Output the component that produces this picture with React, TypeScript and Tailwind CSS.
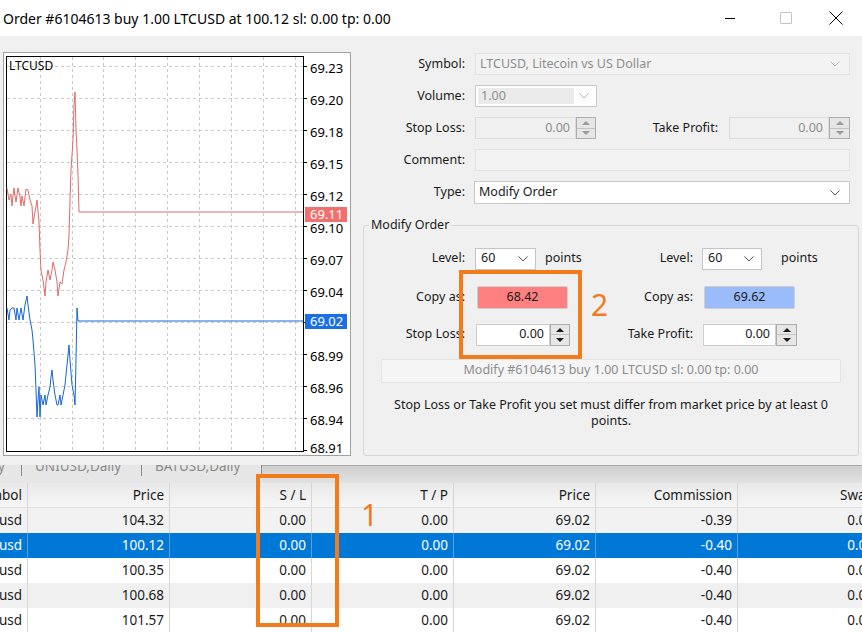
import React from 'react'

const redLine = [
  [7, 188], [9, 200], [11, 194], [12, 206], [13, 196], [14, 188], [15, 196], [16, 202], [18, 188],
  [20, 197], [21, 206], [22, 196], [24, 206], [26, 189], [28, 190], [30, 200], [32, 206], [33, 224],
  [35, 212], [37, 200], [39, 222], [40, 250], [41, 270], [43, 280], [45, 296], [46, 282], [48, 270],
  [50, 280], [52, 270], [53, 262], [55, 270], [57, 282], [58, 296], [60, 282], [62, 284], [64, 270],
  [66, 262], [68, 250], [69, 235], [70, 200], [71, 170], [73, 140], [74, 105], [75, 92], [76, 130],
  [77, 150], [78, 175], [79, 212], [303, 212],
]

const blueLine = [
  [7, 308], [9, 320], [10, 310], [12, 308], [14, 308], [16, 320], [17, 308], [19, 320], [21, 308],
  [23, 320], [25, 305], [27, 296], [28, 305], [30, 320], [32, 330], [33, 340], [35, 365], [36, 390],
  [37, 417], [38, 400], [39, 387], [40, 417], [41, 395], [43, 405], [45, 395], [46, 405], [48, 395],
  [50, 387], [51, 377], [52, 370], [53, 380], [55, 395], [57, 405], [58, 405], [60, 395], [61, 405],
  [63, 395], [65, 385], [67, 365], [69, 345], [70, 360], [72, 385], [74, 395], [75, 405], [76, 360],
  [77, 308], [78, 321], [303, 321],
]

const gridX = [40, 72, 103, 135, 167, 199, 231, 263, 295]
const priceLevels: [number, string | null][] = [
  [66, '69.23'], [98, '69.20'], [130, '69.18'], [162, '69.15'], [194, '69.12'], [226, '69.10'],
  [258, '69.07'], [290, '69.04'], [322, null], [354, '68.99'], [386, '68.96'], [418, '68.94'],
  [446, '68.91'],
]

function Chart() {
  return (
    <div className="h-[404px] w-[348px] overflow-hidden border border-[#a0a0a0] bg-white">
      <svg width="346" height="402" viewBox="0 0 346 402" className="block">
        <g transform="translate(-4 -53)" fontFamily="'Noto Sans', sans-serif">
          {gridX.map((x) => (
            <line key={x} x1={x + 0.5} y1={57} x2={x + 0.5} y2={451} stroke="#c9c9c9" strokeDasharray="3 3" />
          ))}
          {priceLevels.map(([y]) =>
            y < 440 ? (
              <line key={y} x1={7} y1={y + 0.5} x2={303} y2={y + 0.5} stroke="#c9c9c9" strokeDasharray="3 3" />
            ) : null
          )}
          {priceLevels.map(([y]) =>
            y < 440 ? <line key={'t' + y} x1={303} y1={y + 0.5} x2={307} y2={y + 0.5} stroke="#000" /> : null
          )}
          <line x1={303} y1={450.5} x2={307} y2={450.5} stroke="#000" />
          <rect x={6.5} y={56.5} width={297} height={395} fill="none" stroke="#000" />
          <text x={9} y={70} fontSize="12" fill="#000">LTCUSD</text>
          <polyline points={redLine.map((p) => p.join(',')).join(' ')} fill="none" stroke="#e26a6a" strokeWidth="1" />
          <polyline points={blueLine.map((p) => p.join(',')).join(' ')} fill="none" stroke="#1565d8" strokeWidth="1" />
          {priceLevels.map(([y, t]) =>
            t ? (
              <text key={'l' + y} x={310} y={y + 7} fontSize="13" fill="#000">{t}</text>
            ) : null
          )}
          <rect x={305} y={207} width={42} height={15} fill="#f26f6f" />
          <text x={310} y={219} fontSize="13" fill="#fff">69.11</text>
          <rect x={305} y={314} width={42} height={15} fill="#1a6fe6" />
          <text x={310} y={326} fontSize="13" fill="#fff">69.02</text>
        </g>
      </svg>
    </div>
  )
}

function Chevron({ dim }: { dim?: boolean }) {
  return (
    <svg width="10" height="6" viewBox="0 0 10 6" className="shrink-0">
      <path d="M0.5 0.5 L5 5 L9.5 0.5" fill="none" stroke={dim ? '#b8b8b8' : '#5a5a5a'} strokeWidth="1" />
    </svg>
  )
}

function Spin({ dim, w = 'w-[20px]' }: { dim?: boolean; w?: string }) {
  const c = dim ? '#9a9a9a' : '#1a1a1a'
  return (
    <div className={`flex h-[22px] ${w} shrink-0 flex-col border border-[#adadad] bg-[#e6e6e6]`}>
      <div className="flex flex-1 items-center justify-center border-b border-[#c2c2c2]">
        <svg width="8" height="4" viewBox="0 0 8 4">
          <path d="M4 0 L8 4 L0 4 Z" fill={c} />
        </svg>
      </div>
      <div className="flex flex-1 items-center justify-center">
        <svg width="8" height="4" viewBox="0 0 8 4">
          <path d="M0 0 L8 0 L4 4 Z" fill={c} />
        </svg>
      </div>
    </div>
  )
}

function Row({ label, children }: { label: string; children: React.ReactNode }) {
  return (
    <div className="flex h-[22px] items-center">
      <div className="w-[114px] shrink-0 text-right">{label}</div>
      <div className="ml-[10px] flex items-center">{children}</div>
    </div>
  )
}

function OrderForm() {
  return (
    <div className="flex flex-col gap-[10px] pt-[17px] text-[12.5px] text-[#1a1a1a]">
      <Row label="Symbol:">
        <div className="flex h-[22px] w-[375px] items-center justify-between border border-[#e2e2e2] bg-[#f3f3f3] pl-[4px] pr-[9px] text-[#8d8d8d]">
          <span>LTCUSD, Litecoin vs US Dollar</span>
          <Chevron dim />
        </div>
      </Row>
      <Row label="Volume:">
        <div className="flex h-[22px] w-[122px] border border-[#c8c8c8] bg-white p-[2px]">
          <div className="flex w-[96px] items-center bg-[#ebebeb] pl-[3px] text-[#8d8d8d]">1.00</div>
          <div className="flex flex-1 items-center justify-center">
            <Chevron dim />
          </div>
        </div>
      </Row>
      <div className="flex h-[22px] items-center">
        <div className="w-[114px] shrink-0 text-right">Stop Loss:</div>
        <div className="ml-[10px] flex h-[22px] w-[101px] items-center justify-end border border-[#dcdcdc] bg-[#f0f0f0] pr-[5px] text-[#8d8d8d]">
          0.00
        </div>
        <Spin dim />
        <div className="w-[122px] shrink-0 text-right">Take Profit:</div>
        <div className="ml-[11px] flex h-[22px] w-[100px] items-center justify-end border border-[#dcdcdc] bg-[#f0f0f0] pr-[5px] text-[#8d8d8d]">
          0.00
        </div>
        <Spin dim w="w-[21px]" />
      </div>
      <Row label="Comment:">
        <div className="h-[22px] w-[375px] border border-[#e2e2e2] bg-[#f3f3f3]" />
      </Row>
      <div className="flex h-[23px] items-center">
        <div className="w-[114px] shrink-0 text-right">Type:</div>
        <div className="ml-[9px] flex h-[23px] w-[376px] items-center justify-between border border-[#c9c9c9] bg-white pl-[4px] pr-[9px]">
          <span>Modify Order</span>
          <Chevron />
        </div>
      </div>

      <fieldset className="ml-[12px] mt-[2px] h-[240px] w-[496px] rounded-[3px] border border-[#d6d6d6]">
        <legend className="ml-[5px] px-[2px]">Modify Order</legend>
        <div className="flex flex-col pt-[13px]">
          <div className="flex h-[22px] items-center">
            <div className="flex w-[226px] shrink-0 items-center">
              <div className="w-[101px] shrink-0 text-right">Level:</div>
              <div className="ml-[10px] flex h-[22px] w-[61px] items-center justify-between border border-[#c4c4c4] bg-white pl-[5px] pr-[7px]">
                <span>60</span>
                <Chevron />
              </div>
              <span className="ml-[9px]">points</span>
            </div>
            <div className="w-[103px] shrink-0 text-right">Level:</div>
            <div className="ml-[9px] flex h-[22px] w-[60px] items-center justify-between border border-[#c4c4c4] bg-white pl-[5px] pr-[7px]">
              <span>60</span>
              <Chevron />
            </div>
            <span className="ml-[19px]">points</span>
          </div>

          <div className="mt-[16px] flex h-[23px] items-center">
            <div className="flex w-[226px] shrink-0 items-center">
              <div className="w-[101px] shrink-0 text-right">Copy as:</div>
              <div className="ml-[12px] flex h-[23px] w-[91px] items-center justify-center rounded-[2px] border border-[#cfcfcf] bg-[#ff8080]">
                68.42
              </div>
            </div>
            <div className="w-[103px] shrink-0 text-right">Copy as:</div>
            <div className="ml-[11px] flex h-[23px] w-[91px] items-center justify-center rounded-[2px] border border-[#cfcfcf] bg-[#9bbcfa]">
              69.62
            </div>
          </div>

          <div className="mt-[15px] flex h-[22px] items-center">
            <div className="flex w-[226px] shrink-0 items-center">
              <div className="w-[101px] shrink-0 text-right">Stop Loss:</div>
              <div className="ml-[11px] flex h-[22px] w-[74px] items-center justify-end border border-[#cdcdcd] bg-white pr-[5px]">
                0.00
              </div>
              <Spin />
            </div>
            <div className="w-[103px] shrink-0 text-right">Take Profit:</div>
            <div className="ml-[10px] flex h-[22px] w-[73px] items-center justify-end border border-[#cdcdcd] bg-white pr-[5px]">
              0.00
            </div>
            <Spin w="w-[21px]" />
          </div>

          <div className="ml-[17px] mt-[13px] flex h-[24px] w-[460px] items-center justify-center rounded-[2px] border border-[#e4e4e4] bg-[#f5f5f5] text-[#8d8d8d]">
            Modify #6104613 buy 1.00 LTCUSD sl: 0.00 tp: 0.00
          </div>

          <div className="mt-[14px] text-center leading-[16px]">
            Stop Loss or Take Profit you set must differ from market price by at least 0
            <br />
            points.
          </div>
        </div>
      </fieldset>
    </div>
  )
}

const rows = [
  { price: '104.32', comm: '-0.39', bg: 'bg-[#f2f2f2]', sel: false },
  { price: '100.12', comm: '-0.40', bg: 'bg-[#0078d7]', sel: true },
  { price: '100.35', comm: '-0.40', bg: 'bg-white', sel: false },
  { price: '100.68', comm: '-0.40', bg: 'bg-[#f0f0f0]', sel: false },
  { price: '101.57', comm: '-0.40', bg: 'bg-white', sel: false },
]

function Cell({ children, sel, first }: { children: React.ReactNode; sel?: boolean; first?: boolean }) {
  return (
    <div
      className={`flex shrink-0 items-center justify-end overflow-hidden whitespace-nowrap border-r pr-[5px] ${
        first ? 'w-[28px]' : 'w-[142px]'
      } ${sel ? 'border-[#5a9ee0]' : 'border-[#d6d6d6]'}`}
    >
      {children}
    </div>
  )
}

function PositionsTable() {
  return (
    <div className="flex flex-col text-[13.5px] text-[#1a1a1a]">
      <div className="flex h-[25px] border-b border-[#e0e0e0] bg-gradient-to-b from-[#e9e9e9] to-[#f6f6f6]">
        <Cell first>Symbol</Cell>
        <Cell>Price</Cell>
        <Cell>S / L</Cell>
        <Cell>T / P</Cell>
        <Cell>Price</Cell>
        <Cell>Commission</Cell>
        <Cell>Swap</Cell>
      </div>
      {rows.map((r) => (
        <div key={r.price} className={`flex h-[25px] ${r.bg} ${r.sel ? 'text-white' : ''}`}>
          <Cell first sel={r.sel}>ltcusd</Cell>
          <Cell sel={r.sel}>{r.price}</Cell>
          <Cell sel={r.sel}>0.00</Cell>
          <Cell sel={r.sel}>0.00</Cell>
          <Cell sel={r.sel}>69.02</Cell>
          <Cell sel={r.sel}>{r.comm}</Cell>
          <Cell sel={r.sel}>0.00</Cell>
        </div>
      ))}
    </div>
  )
}

export default function App() {
  return (
    <div className="relative h-[632px] w-[862px] overflow-hidden bg-white font-['Noto_Sans',sans-serif]">
      {/* title bar */}
      <div className="flex h-[36px] items-center justify-between bg-white pl-[3px]">
        <span className="text-[14px] text-black">Order #6104613 buy 1.00 LTCUSD at 100.12 sl: 0.00 tp: 0.00</span>
        <div className="flex items-center">
          <div className="flex h-[36px] w-[56px] items-center justify-center">
            <div className="h-px w-[10px] bg-black" />
          </div>
          <div className="flex h-[36px] w-[56px] items-center justify-center">
            <div className="h-[12px] w-[12px] rounded-[1px] border border-[#c4c4c4]" />
          </div>
          <div className="flex h-[36px] w-[48px] items-center justify-center pr-[4px]">
            <svg width="14" height="14" viewBox="0 0 14 14">
              <path d="M0.5 0.5 L13.5 13.5 M13.5 0.5 L0.5 13.5" stroke="#000" strokeWidth="1" />
            </svg>
          </div>
        </div>
      </div>

      {/* dialog body */}
      <div className="flex h-[429px] bg-[#f0f0f0]">
        <div className="pl-[3px] pt-[16px]">
          <Chart />
        </div>
        <OrderForm />
      </div>

      {/* tab strip, half hidden behind the dialog */}
      <div className="flex h-[18px] overflow-hidden text-[13.5px] text-[#8a8a8a]">
        <div className="flex w-[262px] items-start bg-[#e6e6e6]">
          <div className="-mt-[10px] flex h-[22px] items-center">
            <span className="-ml-[2px] w-[23px]">y</span>
            <span className="mt-[8px] h-[12px] w-px bg-[#8a8a8a]" />
            <span className="w-[119px] pl-[13px]">UNIUSD,Daily</span>
            <span className="mt-[8px] h-[12px] w-px bg-[#8a8a8a]" />
            <span className="w-[119px] pl-[13px]">BATUSD,Daily</span>
            <span className="mt-[8px] h-[12px] w-px bg-[#8a8a8a]" />
          </div>
        </div>
        <div className="flex-1 border-t border-[#a9a9a9] bg-gradient-to-b from-[#cfcfcf] to-[#e2e2e2]" />
      </div>

      <PositionsTable />

      {/* annotations */}
      <div className="absolute left-[256px] top-[474px] h-[153px] w-[83px] border-[4px] border-[#f27b1c]" />
      <div className="absolute left-[361px] top-[497px] text-[30px] leading-[36px] text-[#f27b1c]">1</div>
      <div className="absolute left-[459px] top-[270px] h-[89px] w-[123px] border-[4px] border-[#f27b1c]" />
      <div className="absolute left-[591px] top-[287px] text-[30px] leading-[36px] text-[#f27b1c]">2</div>
    </div>
  )
}
